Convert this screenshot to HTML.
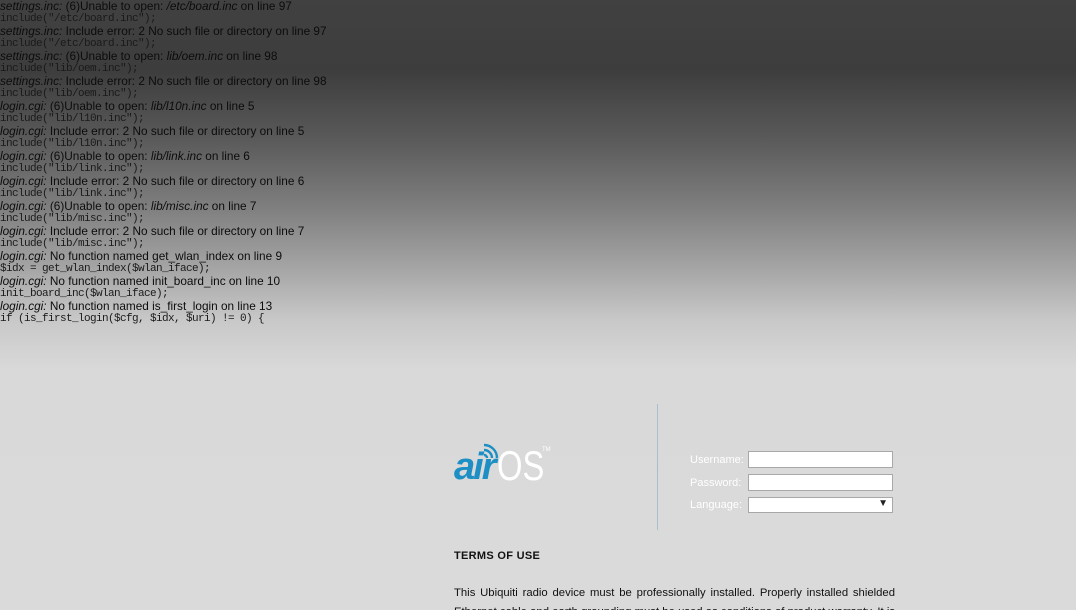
<!DOCTYPE html>
<html><head><meta charset="utf-8">
<style>
html{margin:0;padding:0;width:1076px;height:610px;overflow:hidden;background:#dadada;}
body{margin:0;padding:0;width:1076px;height:610px;overflow:hidden;position:relative;
background:linear-gradient(to bottom,#414141 0px,#3d3d3d 70px,#5a5a5a 140px,#808080 210px,#a6a6a6 270px,#c8c8c8 320px,#d9d9d9 370px,#dadada 610px);
font-family:"Liberation Sans",Arial,sans-serif;}
#log{position:absolute;left:0;top:0;font-size:11.8px;line-height:12.5px;color:#0c0c0c;}
#log b{font-weight:normal;display:block;white-space:nowrap;}
#log code{font-family:"Liberation Mono",monospace;font-size:11px;letter-spacing:-0.6px;color:#1a1a1a;display:block;white-space:pre;line-height:12.5px;}
.vline{position:absolute;left:657px;top:404px;width:1px;height:126px;background:#a9bfcc;}
.lbl{position:absolute;left:690px;color:#fff;font-size:11px;}
.inp{position:absolute;left:748px;width:143px;height:15px;background:#fff;border:1px solid #a8a8a8;}
.terms{position:absolute;left:454px;top:550px;font-size:11px;font-weight:bold;color:#111;letter-spacing:0.3px;}
.clip{position:absolute;left:454px;top:584px;width:441px;height:26px;overflow:hidden;}
.para{width:441px;font-size:11.3px;line-height:19px;color:#111;text-align:justify;}
</style></head><body>
<div id="log">
<b><i>settings.inc:</i> (6)Unable to open: <i>/etc/board.inc</i> on line 97</b><code>include("/etc/board.inc");</code>
<b><i>settings.inc:</i> Include error: 2 No such file or directory on line 97</b><code>include("/etc/board.inc");</code>
<b><i>settings.inc:</i> (6)Unable to open: <i>lib/oem.inc</i> on line 98</b><code>include("lib/oem.inc");</code>
<b><i>settings.inc:</i> Include error: 2 No such file or directory on line 98</b><code>include("lib/oem.inc");</code>
<b><i>login.cgi:</i> (6)Unable to open: <i>lib/l10n.inc</i> on line 5</b><code>include("lib/l10n.inc");</code>
<b><i>login.cgi:</i> Include error: 2 No such file or directory on line 5</b><code>include("lib/l10n.inc");</code>
<b><i>login.cgi:</i> (6)Unable to open: <i>lib/link.inc</i> on line 6</b><code>include("lib/link.inc");</code>
<b><i>login.cgi:</i> Include error: 2 No such file or directory on line 6</b><code>include("lib/link.inc");</code>
<b><i>login.cgi:</i> (6)Unable to open: <i>lib/misc.inc</i> on line 7</b><code>include("lib/misc.inc");</code>
<b><i>login.cgi:</i> Include error: 2 No such file or directory on line 7</b><code>include("lib/misc.inc");</code>
<b><i>login.cgi:</i> No function named get_wlan_index on line 9</b><code>$idx = get_wlan_index($wlan_iface);</code>
<b><i>login.cgi:</i> No function named init_board_inc on line 10</b><code>init_board_inc($wlan_iface);</code>
<b><i>login.cgi:</i> No function named is_first_login on line 13</b><code>if (is_first_login($cfg, $idx, $uri) != 0) {</code>
</div>

<div style="position:absolute;left:454px;top:438px;width:110px;height:50px;">
<span style="position:absolute;left:0;top:10px;font-size:38px;font-style:italic;font-weight:bold;color:#1e8fc4;letter-spacing:-2px;line-height:38px;">air</span>
<svg style="position:absolute;left:26px;top:4px" width="20" height="20" viewBox="0 0 20 20"><g fill="none" stroke="#1e8fc4" stroke-width="2.4"><path d="M4 13a3 3 0 0 1 3 3"/><path d="M4 8a8 8 0 0 1 8 8"/><path d="M4 3a13 13 0 0 1 13 13"/></g></svg>
<span style="position:absolute;left:43px;top:7px;font-size:42px;color:#fff;line-height:42px;transform:scaleX(0.78);transform-origin:left;">OS</span>
<span style="position:absolute;left:88px;top:9px;font-size:6px;color:#fff;">TM</span>
</div>

<div class="vline"></div>
<div class="lbl" style="top:454px">Username:</div>
<div class="inp" style="top:451px"></div>
<div class="lbl" style="top:477px">Password:</div>
<div class="inp" style="top:474px"></div>
<div class="lbl" style="top:499px">Language:</div>
<div class="inp" style="top:497px;height:14px"><span style="position:absolute;right:4px;top:0;font-size:10px;color:#222;">&#9660;</span></div>

<div class="terms">TERMS OF USE</div>
<div class="clip"><div class="para">This Ubiquiti radio device must be professionally installed. Properly installed shielded Ethernet cable and earth grounding must be used as conditions of product warranty. It is the installer's responsibility to follow local country regulations.</div></div>
</body></html>
